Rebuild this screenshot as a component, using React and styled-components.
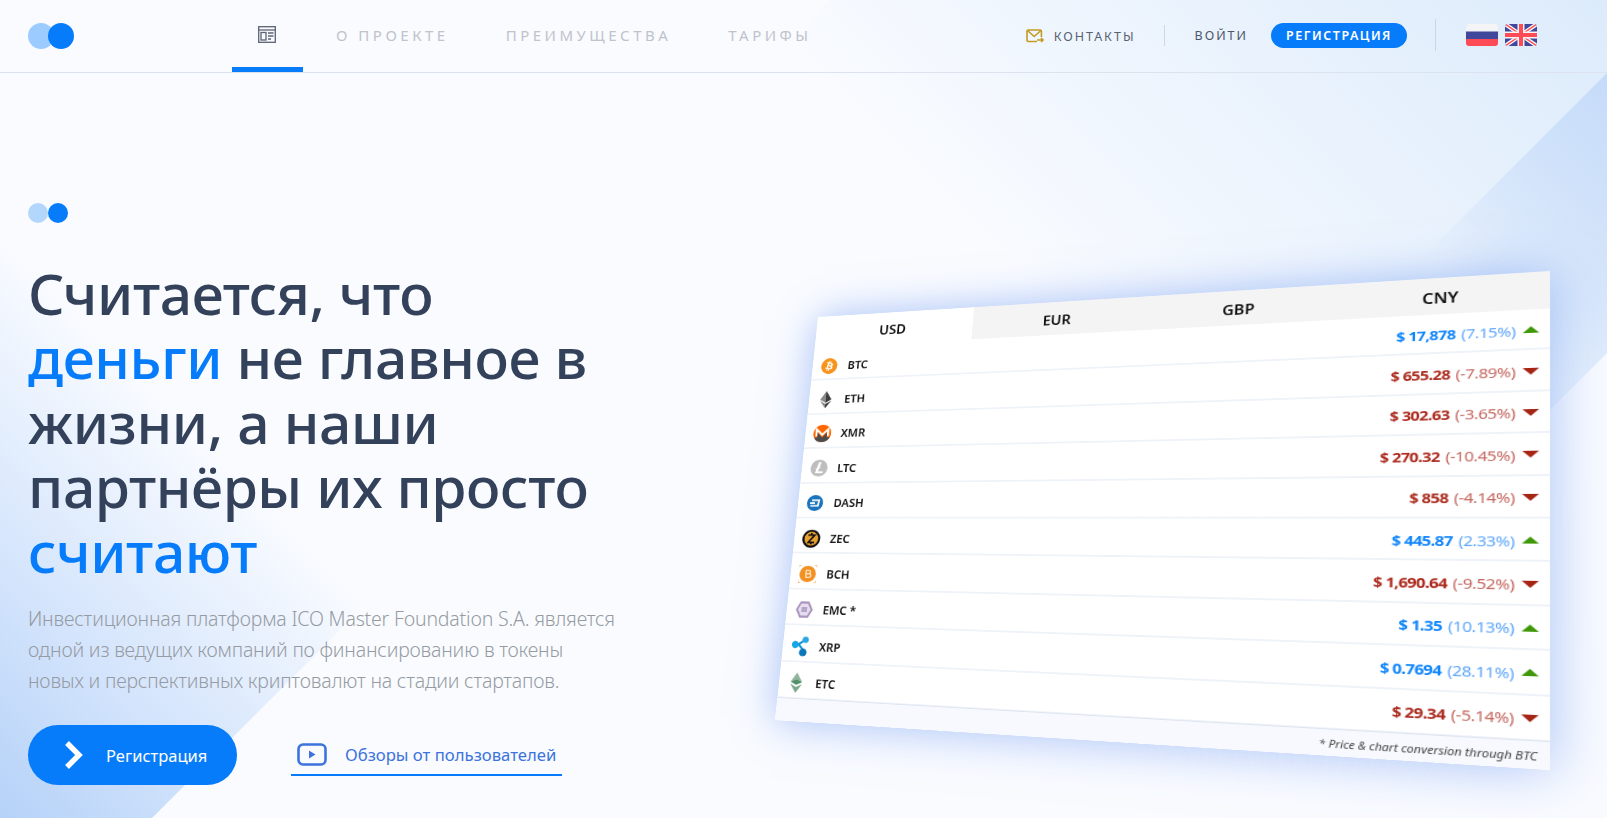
import React from 'react';
import styled, {createGlobalStyle} from 'styled-components';
import {SiBitcoin, SiLitecoin} from 'react-icons/si';

const CARD_W = 760;
const CARD_H = 500;
const CARD_X = 790;
const CARD_Y = 270;

// corners of the tilted price table as they land on the page
const quad = [[818, 317], [1550, 271], [1550, 770], [775, 720]].map(([x, y]) => [x - CARD_X, y - CARD_Y]);

const tiltMatrix = () => {
  const [[x0, y0], [x1, y1], [x2, y2], [x3, y3]] = quad;
  const dx1 = x1 - x2, dx2 = x3 - x2, dx3 = x0 - x1 + x2 - x3;
  const dy1 = y1 - y2, dy2 = y3 - y2, dy3 = y0 - y1 + y2 - y3;
  const den = dx1 * dy2 - dx2 * dy1;
  const g = (dx3 * dy2 - dx2 * dy3) / den;
  const h = (dx1 * dy3 - dx3 * dy1) / den;
  const a = x1 - x0 + g * x1, b = x3 - x0 + h * x3;
  const d = y1 - y0 + g * y1, e = y3 - y0 + h * y3;
  return [a / CARD_W, d / CARD_W, 0, g / CARD_W, b / CARD_H, e / CARD_H, 0, h / CARD_H, 0, 0, 1, 0, x0, y0, 0, 1].join(',');
};

const GlobalStyle = createGlobalStyle`
  html, body {
    margin: 0;
    padding: 0;
    background: #f9fbff;
  }
  body {
    font-family: "Noto Sans", "Open Sans", sans-serif;
    overflow: hidden;
  }
  * {
    box-sizing: border-box;
  }
`;

const Page = styled.div`
  position: relative;
  width: 1607px;
  height: 818px;
  overflow: hidden;
  background: #f9fbff;
`;

const Wedge = styled.div`
  position: absolute;
  inset: 0;
  clip-path: polygon(${props => props.$shape});
  background: linear-gradient(45deg, ${props => props.$stops});
`;

const Header = styled.header`
  position: relative;
  display: flex;
  align-items: stretch;
  height: 73px;
  padding: 0 70px 0 28px;
  border-bottom: 1px solid #dde3ee;
`;

const Logo = styled.div`
  display: flex;
  align-items: center;
  width: ${props => props.$small ? 40 : 46}px;
`;

const Dot = styled.span`
  flex: none;
  width: ${props => props.$size}px;
  height: ${props => props.$size}px;
  border-radius: 50%;
  background: ${props => props.$color};
  margin-left: ${props => props.$shift || 0}px;
`;

const Nav = styled.nav`
  display: flex;
  align-items: stretch;
  margin-left: 158px;
`;

const IconTab = styled.a`
  display: flex;
  justify-content: center;
  width: 71px;
  padding: 26px 2px 0 0;
  border-bottom: 5px solid #077cfb;
`;

const NavLinks = styled.div`
  display: flex;
  align-items: center;
  gap: 57px;
  margin-left: 33px;
  padding-bottom: 2px;
`;

const NavLink = styled.a`
  font-size: 15px;
  letter-spacing: 3.5px;
  color: #bfc3cb;
`;

const Side = styled.div`
  display: flex;
  align-items: center;
  margin-left: auto;
  padding-bottom: 2px;
`;

const Contacts = styled.a`
  display: flex;
  align-items: center;
  gap: 10px;
  font-size: 12.5px;
  letter-spacing: 2px;
  color: #596171;
  padding-top: 2px;
`;

const Divider = styled.span`
  width: 1px;
  height: ${props => props.$height}px;
  background: #ccd6e4;
  margin: 0 ${props => props.$right}px 0 ${props => props.$left}px;
`;

const Login = styled.a`
  font-size: 12.5px;
  letter-spacing: 2px;
  color: #4e5768;
  margin-right: 23px;
`;

const SignUp = styled.a`
  display: flex;
  align-items: center;
  justify-content: center;
  width: 136px;
  height: 25px;
  border-radius: 13px;
  background: #077cfb;
  color: #fff;
  font-size: 12.5px;
  font-weight: 600;
  letter-spacing: 1.5px;
`;

const Flags = styled.div`
  display: flex;
  gap: 7px;
`;

const Hero = styled.main`
  position: relative;
  display: flex;
  height: 745px;
`;

const Intro = styled.section`
  width: 680px;
  padding: 130px 0 0 28px;
`;

const Title = styled.h1`
  margin: 38px 0 0;
  font-size: 57px;
  line-height: 64.4px;
  font-weight: 500;
  letter-spacing: -0.4px;
  color: #33425a;
`;

const Accent = styled.span`
  color: #077cfb;
`;

const Lead = styled.p`
  margin: 20px 0 0;
  font-size: 19.5px;
  line-height: 31px;
  font-weight: 300;
  letter-spacing: -0.19px;
  color: #969ba3;
`;

const Actions = styled.div`
  display: flex;
  align-items: flex-start;
  margin-top: 29px;
`;

const PrimaryButton = styled.a`
  display: flex;
  align-items: center;
  width: 209px;
  height: 60px;
  padding-left: 36px;
  gap: 22px;
  border-radius: 30px;
  background: #077cfb;
  color: #fff;
  font-size: 16.5px;
`;

const VideoLink = styled.a`
  display: flex;
  align-items: center;
  gap: 18px;
  width: 271px;
  height: 45px;
  margin: 6px 0 0 54px;
  padding: 3px 0 0 6px;
  border-bottom: 2px solid #077cfb;
  color: #3d73dc;
  font-size: 16.7px;
  white-space: nowrap;
`;

const TableSlot = styled.section`
  width: ${CARD_W}px;
  margin: ${CARD_Y - 73}px ${1607 - CARD_X - CARD_W}px 0 auto;
`;

const Table = styled.div`
  display: flex;
  flex-direction: column;
  width: ${CARD_W}px;
  height: ${CARD_H}px;
  background: #fff;
  box-shadow: 0 0 46px rgba(86, 136, 240, 0.5);
  transform-origin: 0 0;
  transform: matrix3d(${tiltMatrix()});
`;

const Tabs = styled.div`
  display: grid;
  grid-template-columns: repeat(4, 1fr);
  height: 40px;
  flex: none;
`;

const Tab = styled.div`
  display: flex;
  align-items: center;
  justify-content: center;
  padding-top: 3px;
  background: ${props => props.$active ? '#fff' : '#f4f4f4'};
  color: #111;
  font-size: 16px;
  font-weight: 600;
`;

const Row = styled.div`
  display: flex;
  align-items: center;
  height: 43.4px;
  flex: none;
  padding: 0 9px 0 10px;
  border-bottom: 2px solid #eef2f9;
`;

const Coin = styled.span`
  display: flex;
  align-items: center;
  justify-content: center;
  width: 22px;
  height: 22px;
  flex: none;
  margin-top: 8px;
`;

const Symbol = styled.span`
  margin: 8px 0 0 12px;
  font-size: 13.5px;
  font-weight: 600;
  color: #111;
`;

const Quote = styled.div`
  display: flex;
  align-items: center;
  margin: 2px 0 0 auto;
  font-size: 14.5px;
  letter-spacing: -0.35px;
  color: ${props => props.$up ? '#5ea6fb' : '#c4665e'};
`;

const Price = styled.b`
  font-weight: 700;
  letter-spacing: -0.6px;
  margin-right: 5px;
  color: ${props => props.$up ? '#0f85fb' : '#ac2a1e'};
`;

const Caret = styled.i`
  width: 0;
  height: 0;
  margin-left: 6px;
  border-left: 7px solid transparent;
  border-right: 7px solid transparent;
  border-${props => props.$up ? 'bottom' : 'top'}: 7px solid ${props => props.$up ? '#3e9808' : '#a52414'};
`;

const Note = styled.div`
  flex: 1;
  display: flex;
  align-items: center;
  justify-content: flex-end;
  padding: 2px 10px 0 0;
  background: #f7f9fe;
  border-top: 1px solid #dfe5f0;
  margin-top: -1px;
  font-size: 10.6px;
  font-style: italic;
  color: #444;
`;

const PageIcon = () => (
  <svg width="18" height="17" viewBox="0 0 18 17" fill="none" stroke="#5a6474" strokeWidth="1.3">
    <rect x=".7" y=".7" width="16.6" height="15.6" />
    <path d="M1 4h16" />
    <rect x="3" y="6.5" width="5" height="7.5" />
    <path d="M10 7h5.5M10 10h5.5M10 13h3" />
  </svg>
);

const MailIcon = () => (
  <svg width="18" height="14" viewBox="0 0 18 14" fill="none" stroke="#c39a22" strokeWidth="1.6">
    <path d="M11 12.5H2.2a1.2 1.2 0 0 1-1.2-1.2V2.2A1.2 1.2 0 0 1 2.2 1h12a1.2 1.2 0 0 1 1.2 1.2V8" />
    <path d="M1.5 1.5 8.2 7.5l6.7-6" />
    <path d="M11 11h6M15 9l2 2-2 2" />
  </svg>
);

const RuFlag = () => (
  <svg width="32" height="22" viewBox="0 0 32 22">
    <clipPath id="ru"><rect width="32" height="22" rx="3" /></clipPath>
    <g clipPath="url(#ru)">
      <rect width="32" height="7.5" fill="#f4f4f6" />
      <rect y="7.5" width="32" height="7.5" fill="#41479b" />
      <rect y="15" width="32" height="7" fill="#ff4b55" />
    </g>
  </svg>
);

const UkFlag = () => (
  <svg width="32" height="22" viewBox="0 0 32 22">
    <clipPath id="uk"><rect width="32" height="22" rx="3" /></clipPath>
    <g clipPath="url(#uk)">
      <rect width="32" height="22" fill="#41479b" />
      <path d="M0 0 32 22M32 0 0 22" stroke="#f5f5f5" strokeWidth="4" />
      <path d="M0 0 32 22M32 0 0 22" stroke="#ff4b55" strokeWidth="1.4" />
      <path d="M16 0v22M0 11h32" stroke="#f5f5f5" strokeWidth="7" />
      <path d="M16 0v22M0 11h32" stroke="#ff4b55" strokeWidth="4" />
    </g>
  </svg>
);

const Chevron = () => (
  <svg width="20" height="30" viewBox="0 0 20 30" fill="none" stroke="#fff" strokeWidth="5.4">
    <path d="M3 3l12 12L3 27" />
  </svg>
);

const PlayIcon = () => (
  <svg width="30" height="23" viewBox="0 0 30 23" fill="none">
    <rect x="1.5" y="1.5" width="27" height="20" rx="4.5" stroke="#3d73dc" strokeWidth="2.6" />
    <path d="M12 7.5v8l6.5-4z" fill="#3d73dc" />
  </svg>
);

const coins = {
  BTC: <SiBitcoin size={20} color="#f7931a" />,
  ETH: (
    <svg width="14" height="22" viewBox="0 0 14 22">
      <path d="M7 0 0 11l7 4z" fill="#8a8a8a" />
      <path d="M7 0l7 11-7 4z" fill="#3c3c3d" />
      <path d="M0 12.5 7 22v-5.5z" fill="#8a8a8a" />
      <path d="M14 12.5 7 22v-5.5z" fill="#3c3c3d" />
    </svg>
  ),
  XMR: (
    <svg width="22" height="22" viewBox="0 0 22 22">
      <circle cx="11" cy="11" r="11" fill="#ff6600" />
      <path d="M1.2 16h4v-6l6 6 6-6v6h3.6A11 11 0 0 1 1.2 16z" fill="#4c4c4c" />
      <path d="M3.8 14.5V5.5L11 12.6l7.2-7.1v9" fill="none" stroke="#fff" strokeWidth="2.4" />
    </svg>
  ),
  LTC: <SiLitecoin size={21} color="#bebebe" />,
  DASH: (
    <svg width="20" height="20" viewBox="0 0 20 20">
      <circle cx="10" cy="10" r="10" fill="#1c75bc" />
      <path d="M6 6.5h9L13.8 13.5H4.5M4 10h6" fill="none" stroke="#fff" strokeWidth="2" />
    </svg>
  ),
  ZEC: (
    <svg width="22" height="22" viewBox="0 0 22 22">
      <circle cx="11" cy="11" r="11" fill="#111" />
      <circle cx="11" cy="11" r="8.4" fill="#e9a12f" />
      <path d="M7 6.5h8L7.5 15.5H15M11 4v3M11 15v3" fill="none" stroke="#111" strokeWidth="2" />
    </svg>
  ),
  BCH: (
    <svg width="22" height="22" viewBox="0 0 22 22">
      <path d="M0 0h3v1H1v2H0zM22 0h-3v1h2v2h1zM0 22h3v-1H1v-2H0zM22 22h-3v-1h2v-2h1z" fill="#f7c58a" />
      <circle cx="11" cy="11" r="10" fill="#f29022" />
      <path d="M9 6.5h3.2a2 2 0 0 1 0 4.3H9zM9 10.8h3.8a2.2 2.2 0 0 1 0 4.4H9zM9 6v10" fill="none" stroke="#fbe3c4" strokeWidth="1.6" />
    </svg>
  ),
  EMC: (
    <svg width="21" height="20" viewBox="0 0 21 20">
      <path d="M6 1.5h9l4.5 8.5-4.5 8.5H6L1.5 10z" fill="#e6deef" stroke="#a893bf" strokeWidth="2.4" />
      <rect x="7" y="7" width="7" height="6" fill="#b5a5c9" />
    </svg>
  ),
  XRP: (
    <svg width="22" height="24" viewBox="0 0 22 24" fill="none">
      <path d="M17 4 9 9.5l8 9" stroke="#0d93d8" strokeWidth="2.6" />
      <circle cx="17" cy="4" r="3.8" fill="#2aa6e3" />
      <circle cx="5" cy="10" r="4.2" fill="#16a6e8" />
      <circle cx="15" cy="19" r="4.6" fill="#0a78b8" />
    </svg>
  ),
  ETC: (
    <svg width="14" height="24" viewBox="0 0 14 24">
      <path d="M7 0 0 11l7-3 7 3z" fill="#8fb59a" />
      <path d="M0 11l7-3 7 3-7 3.5z" fill="#4f8f67" />
      <path d="M0 13.5 7 24l7-10.5-7 3.5z" fill="#7aa88a" />
    </svg>
  ),
};

const rows = [
  {name: 'BTC', price: '$ 17,878', change: '(7.15%)', up: true},
  {name: 'ETH', price: '$ 655.28', change: '(-7.89%)'},
  {name: 'XMR', price: '$ 302.63', change: '(-3.65%)'},
  {name: 'LTC', price: '$ 270.32', change: '(-10.45%)'},
  {name: 'DASH', price: '$ 858', change: '(-4.14%)'},
  {name: 'ZEC', price: '$ 445.87', change: '(2.33%)', up: true},
  {name: 'BCH', price: '$ 1,690.64', change: '(-9.52%)'},
  {name: 'EMC', label: 'EMC *', price: '$ 1.35', change: '(10.13%)', up: true},
  {name: 'XRP', price: '$ 0.7694', change: '(28.11%)', up: true},
  {name: 'ETC', price: '$ 29.34', change: '(-5.14%)'},
];

const App = () => (
  <Page>
    <GlobalStyle />
    <Wedge
      $shape="0 0, 970px 0, 152px 818px, 0 818px"
      $stops="#b5d2f8 0%, rgba(190,215,250,.75) 8%, rgba(249,251,255,0) 24%"
    />
    <Wedge
      $shape="830px 0, 1607px 0, 1607px 353px, 1142px 818px, 12px 818px"
      $stops="rgba(220,235,251,0) 64%, #dcebfb 100%"
    />
    <Wedge
      $shape="1607px 73px, 1607px 353px, 1142px 818px, 862px 818px"
      $stops="rgba(196,218,250,0) 82%, #d0e2fa 91%, #c4dafa 98%"
    />
    <Header>
      <Logo>
        <Dot $size={26} $color="#9ccbff" />
        <Dot $size={26} $color="#077cfb" $shift={-6} />
      </Logo>
      <Nav>
        <IconTab><PageIcon /></IconTab>
        <NavLinks>
          <NavLink>О ПРОЕКТЕ</NavLink>
          <NavLink>ПРЕИМУЩЕСТВА</NavLink>
          <NavLink>ТАРИФЫ</NavLink>
        </NavLinks>
      </Nav>
      <Side>
        <Contacts><MailIcon />КОНТАКТЫ</Contacts>
        <Divider $height={21} $left={28} $right={30} />
        <Login>ВОЙТИ</Login>
        <SignUp>РЕГИСТРАЦИЯ</SignUp>
        <Divider $height={32} $left={28} $right={30} />
        <Flags>
          <RuFlag />
          <UkFlag />
        </Flags>
      </Side>
    </Header>
    <Hero>
      <Intro>
        <Logo $small>
          <Dot $size={20} $color="#b3d6fd" />
          <Dot $size={20} $color="#077cfb" />
        </Logo>
        <Title>
          Считается, что<br />
          <Accent>деньги</Accent> не главное в<br />
          жизни, а наши<br />
          партнёры их просто<br />
          <Accent>считают</Accent>
        </Title>
        <Lead>
          Инвестиционная платформа ICO Master Foundation S.A. является<br />
          одной из ведущих компаний по финансированию в токены<br />
          новых и перспективных криптовалют на стадии стартапов.
        </Lead>
        <Actions>
          <PrimaryButton><Chevron />Регистрация</PrimaryButton>
          <VideoLink><PlayIcon />Обзоры от пользователей</VideoLink>
        </Actions>
      </Intro>
      <TableSlot>
        <Table>
          <Tabs>
            <Tab $active>USD</Tab>
            <Tab>EUR</Tab>
            <Tab>GBP</Tab>
            <Tab>CNY</Tab>
          </Tabs>
          {rows.map(row => (
            <Row key={row.name}>
              <Coin>{coins[row.name]}</Coin>
              <Symbol>{row.label || row.name}</Symbol>
              <Quote $up={row.up}>
                <Price $up={row.up}>{row.price}</Price>
                {row.change}
                <Caret $up={row.up} />
              </Quote>
            </Row>
          ))}
          <Note>* Price &amp; chart conversion through BTC</Note>
        </Table>
      </TableSlot>
    </Hero>
  </Page>
);

export default App;
